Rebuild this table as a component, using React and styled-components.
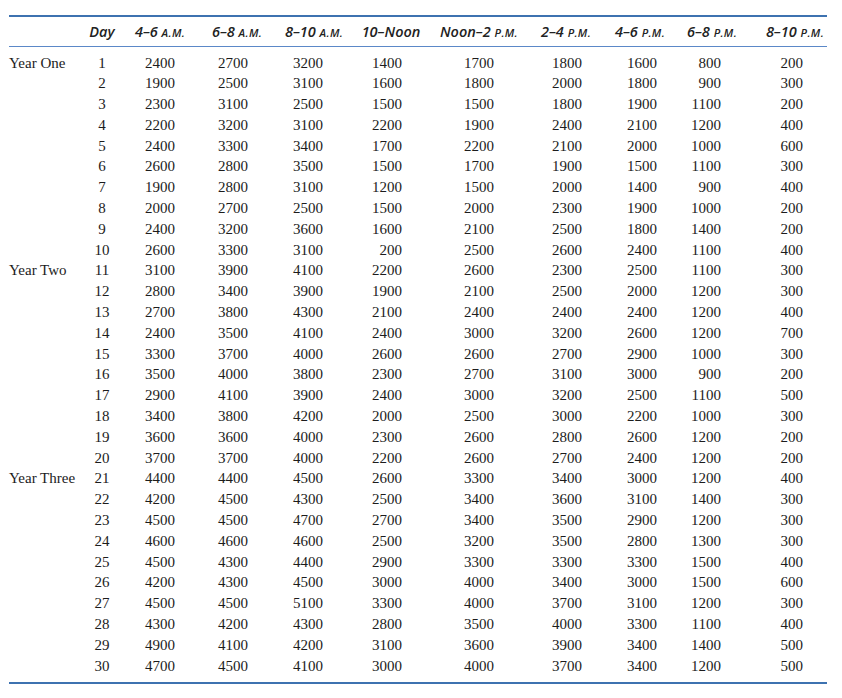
import styled, { createGlobalStyle } from "styled-components";

const GlobalStyle = createGlobalStyle`
  html, body {
    margin: 0;
    padding: 0;
    background: #fff;
  }
`;

const blue = "#3d72b0";

// width, padding-right for the numbers
const columns = [
  { key: "c1", label: "4–6", sub: "A.M.", width: 84, pad: 27 },
  { key: "c2", label: "6–8", sub: "A.M.", width: 70, pad: 24 },
  { key: "c3", label: "8–10", sub: "A.M.", width: 84, pad: 33 },
  { key: "c4", label: "10–Noon", sub: "", width: 70, pad: 24 },
  { key: "c5", label: "Noon–2", sub: "P.M.", width: 106, pad: 38 },
  { key: "c6", label: "2–4", sub: "P.M.", width: 68, pad: 18 },
  { key: "c7", label: "4–6", sub: "P.M.", width: 80, pad: 23 },
  { key: "c8", label: "6–8", sub: "P.M.", width: 64, pad: 23 },
  { key: "c9", label: "8–10", sub: "P.M.", width: 83, pad: 24, last: true },
];

const data = [
  [2400, 2700, 3200, 1400, 1700, 1800, 1600, 800, 200],
  [1900, 2500, 3100, 1600, 1800, 2000, 1800, 900, 300],
  [2300, 3100, 2500, 1500, 1500, 1800, 1900, 1100, 200],
  [2200, 3200, 3100, 2200, 1900, 2400, 2100, 1200, 400],
  [2400, 3300, 3400, 1700, 2200, 2100, 2000, 1000, 600],
  [2600, 2800, 3500, 1500, 1700, 1900, 1500, 1100, 300],
  [1900, 2800, 3100, 1200, 1500, 2000, 1400, 900, 400],
  [2000, 2700, 2500, 1500, 2000, 2300, 1900, 1000, 200],
  [2400, 3200, 3600, 1600, 2100, 2500, 1800, 1400, 200],
  [2600, 3300, 3100, 200, 2500, 2600, 2400, 1100, 400],
  [3100, 3900, 4100, 2200, 2600, 2300, 2500, 1100, 300],
  [2800, 3400, 3900, 1900, 2100, 2500, 2000, 1200, 300],
  [2700, 3800, 4300, 2100, 2400, 2400, 2400, 1200, 400],
  [2400, 3500, 4100, 2400, 3000, 3200, 2600, 1200, 700],
  [3300, 3700, 4000, 2600, 2600, 2700, 2900, 1000, 300],
  [3500, 4000, 3800, 2300, 2700, 3100, 3000, 900, 200],
  [2900, 4100, 3900, 2400, 3000, 3200, 2500, 1100, 500],
  [3400, 3800, 4200, 2000, 2500, 3000, 2200, 1000, 300],
  [3600, 3600, 4000, 2300, 2600, 2800, 2600, 1200, 200],
  [3700, 3700, 4000, 2200, 2600, 2700, 2400, 1200, 200],
  [4400, 4400, 4500, 2600, 3300, 3400, 3000, 1200, 400],
  [4200, 4500, 4300, 2500, 3400, 3600, 3100, 1400, 300],
  [4500, 4500, 4700, 2700, 3400, 3500, 2900, 1200, 300],
  [4600, 4600, 4600, 2500, 3200, 3500, 2800, 1300, 300],
  [4500, 4300, 4400, 2900, 3300, 3300, 3300, 1500, 400],
  [4200, 4300, 4500, 3000, 4000, 3400, 3000, 1500, 600],
  [4500, 4500, 5100, 3300, 4000, 3700, 3100, 1200, 300],
  [4300, 4200, 4300, 2800, 3500, 4000, 3300, 1100, 400],
  [4900, 4100, 4200, 3100, 3600, 3900, 3400, 1400, 500],
  [4700, 4500, 4100, 3000, 4000, 3700, 3400, 1200, 500],
];

const yearLabels = { 1: "Year One", 11: "Year Two", 21: "Year Three" };

const Page = styled.div`
  padding: 15px 0 0 9px;
`;

const Table = styled.table`
  width: 818px;
  table-layout: fixed;
  border-collapse: collapse;
  border-top: 2px solid ${blue};
  border-bottom: 2px solid ${blue};
  font-family: "Liberation Serif", "Times New Roman", serif;
  font-size: 15px;
  color: #1c1c1c;
`;

const HeadRow = styled.tr`
  height: 30px;
  border-bottom: 1px solid #5b88c8;
`;

const HeadCell = styled.th`
  padding: 0 ${(p) => (p.$last ? "3px" : "0")} 0 0;
  text-align: ${(p) => (p.$last ? "right" : "center")};
  font-family: "Open Sans", "Liberation Sans", sans-serif;
  font-style: italic;
  font-weight: 600;
  font-size: 14.5px;
  color: #222;
  white-space: nowrap;
  vertical-align: middle;
`;

const SmallCaps = styled.span`
  font-size: 11px;
  letter-spacing: 0.4px;
`;

const BodyRow = styled.tr`
  height: 20.8px;

  &:first-child td {
    padding-top: 6px;
  }
  &:last-child td {
    padding-bottom: 6px;
  }
`;

const LabelCell = styled.td`
  padding: 0;
  text-align: left;
  white-space: nowrap;
  line-height: 20.8px;
`;

const DayCell = styled.td`
  padding: 0;
  text-align: center;
  line-height: 20.8px;
`;

const NumCell = styled.td`
  padding: 0 ${(p) => p.$pad}px 0 0;
  text-align: right;
  line-height: 20.8px;
`;

export default function App() {
  return (
    <>
      <GlobalStyle />
      <Page>
        <Table>
          <colgroup>
            <col style={{ width: 77 }} />
            <col style={{ width: 32 }} />
            {columns.map((c) => (
              <col key={c.key} style={{ width: c.width }} />
            ))}
          </colgroup>
          <thead>
            <HeadRow>
              <HeadCell />
              <HeadCell>Day</HeadCell>
              {columns.map((c) => (
                <HeadCell key={c.key} $last={c.last}>
                  {c.label}
                  {c.sub && (
                    <>
                      {" "}
                      <SmallCaps>{c.sub}</SmallCaps>
                    </>
                  )}
                </HeadCell>
              ))}
            </HeadRow>
          </thead>
          <tbody>
            {data.map((row, i) => (
              <BodyRow key={i}>
                <LabelCell>{yearLabels[i + 1] || ""}</LabelCell>
                <DayCell>{i + 1}</DayCell>
                {row.map((v, j) => (
                  <NumCell key={j} $pad={columns[j].pad}>
                    {v}
                  </NumCell>
                ))}
              </BodyRow>
            ))}
          </tbody>
        </Table>
      </Page>
    </>
  );
}
